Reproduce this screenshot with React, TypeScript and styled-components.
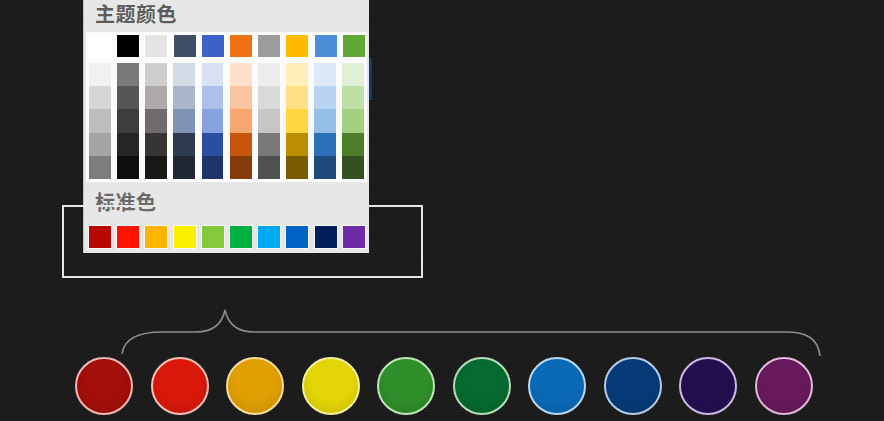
import styled, { createGlobalStyle } from 'styled-components';

const GlobalStyle = createGlobalStyle`
  html, body {
    margin: 0;
    padding: 0;
    background: #1c1c1c;
  }
  * {
    box-sizing: border-box;
  }
`;

// first row of the theme palette
const themeTop = [
  '#ffffff', '#000000', '#e4e4e4', '#3f4d66', '#3b62c8',
  '#ee7214', '#9c9c9c', '#ffbb00', '#4a8fd8', '#5fa832',
];

// tint/shade columns under every theme colour
const shades = [
  ['#f1f1f1', '#d6d6d6', '#bdbdbd', '#a4a4a4', '#7d7d7d'],
  ['#7a7a7a', '#565656', '#3d3d3d', '#252525', '#0e0e0e'],
  ['#cfcdcd', '#aeaaaa', '#716c6c', '#373434', '#191818'],
  ['#d5dbe6', '#a9b6cb', '#7f93b2', '#2e3a4f', '#202836'],
  ['#d8e0f3', '#adc0ea', '#86a2e0', '#2c4ea0', '#1e3468'],
  ['#fde1cc', '#f9c4a0', '#f6a66e', '#c6560e', '#843a0b'],
  ['#ececec', '#d9d9d9', '#c6c6c6', '#797979', '#505050'],
  ['#fff0bb', '#ffe086', '#ffd640', '#bb8d00', '#7a5b00'],
  ['#dde9f8', '#b8d4f0', '#95bfe8', '#2a6fb8', '#1d4a7a'],
  ['#e0efd6', '#bfdfa8', '#a0d080', '#4c7e2a', '#33521f'],
];

const standard = [
  '#b80800', '#ff1200', '#ffb400', '#fbf000', '#85c93c',
  '#00b042', '#00a9f2', '#0062c2', '#001e5c', '#6f2aa6',
];

const dots = [
  { fill: '#a30f0a', ring: '#f0b8b4' },
  { fill: '#d9180a', ring: '#f6c0b6' },
  { fill: '#e0a004', ring: '#f3dc9c' },
  { fill: '#e4d606', ring: '#f4eea0' },
  { fill: '#2f8f2a', ring: '#bfe4b8' },
  { fill: '#066b30', ring: '#b6dcb8' },
  { fill: '#0b6ab8', ring: '#b8d8f0' },
  { fill: '#073b78', ring: '#b4cbe8' },
  { fill: '#22104f', ring: '#cdb8e2' },
  { fill: '#681a5c', ring: '#e2b8dc' },
];

export default function App() {
  return (
    <>
      <GlobalStyle />
      <Stage>
        <TopRow>
          <Panel>
            <Heading>主题颜色</Heading>
            <ThemeArea>
              <SwatchRow>
                {themeTop.map((c, i) => (
                  <Swatch key={i} $color={c} />
                ))}
              </SwatchRow>
              <ShadeRow>
                {shades.map((col, i) => (
                  <ShadeColumn key={i}>
                    {col.map((c, j) => (
                      <Shade key={j} $color={c} />
                    ))}
                  </ShadeColumn>
                ))}
              </ShadeRow>
            </ThemeArea>
            <SubHeading>标准色</SubHeading>
            <StandardRow>
              {standard.map((c, i) => (
                <Swatch key={i} $color={c} />
              ))}
            </StandardRow>
          </Panel>
          <Sliver />
        </TopRow>

        <Brace width="884" height="52" viewBox="0 0 884 52">
          <path
            d="M122,48 C124,33 138,26 162,26 L196,26 C213,26 222,18 225,4 C228,18 237,26 254,26 L786,26 C806,26 818,32 820,50"
            fill="none"
            stroke="#8c8c8c"
            strokeWidth="1.6"
          />
        </Brace>

        <DotRow>
          {dots.map((d, i) => (
            <Dot key={i} $fill={d.fill} $ring={d.ring} />
          ))}
        </DotRow>

        {/* annotation frame drawn over the palette */}
        <Highlight />
      </Stage>
    </>
  );
}

const Stage = styled.div`
  position: relative;
  width: 884px;
  height: 421px;
  overflow: hidden;
  display: flex;
  flex-direction: column;
  background-color: #1b1b1b;
  background-image: repeating-linear-gradient(
    0deg,
    rgba(255, 255, 255, 0.015) 0px,
    rgba(255, 255, 255, 0.015) 1px,
    transparent 1px,
    transparent 3px
  );
`;

const TopRow = styled.div`
  display: flex;
  align-items: flex-start;
  padding-left: 83px;
`;

const Panel = styled.div`
  width: 286px;
  height: 253px;
  background: #e7e7e7;
  border-left: 1px solid #c4c4c4;
  display: flex;
  flex-direction: column;
  padding-left: 2px;
`;

const Heading = styled.div`
  height: 32px;
  padding: 0 0 0 9px;
  font-family: 'Noto Sans CJK SC', 'Noto Sans', sans-serif;
  font-size: 20px;
  font-weight: 700;
  line-height: 28px;
  color: #5c5c5c;
  letter-spacing: 0.5px;
`;

const ThemeArea = styled.div`
  width: 281px;
  background: #fbfbfb;
  padding: 3px 3px 3px 3px;
  display: flex;
  flex-direction: column;
  gap: 6px;
`;

const SwatchRow = styled.div`
  display: flex;
  gap: 6.2px;
`;

const Swatch = styled.div<{ $color: string }>`
  width: 22px;
  height: 22px;
  flex: none;
  background: ${(p) => p.$color};
  box-shadow: 0 0 0 1px rgba(255, 255, 255, 0.7);
`;

const ShadeRow = styled.div`
  display: flex;
  gap: 6.2px;
`;

const ShadeColumn = styled.div`
  width: 22px;
  display: flex;
  flex-direction: column;
`;

const Shade = styled.div<{ $color: string }>`
  height: 23.2px;
  background: ${(p) => p.$color};
`;

const SubHeading = styled.div`
  height: 44px;
  padding: 8px 0 0 9px;
  font-family: 'Noto Sans CJK SC', 'Noto Sans', sans-serif;
  font-size: 20px;
  font-weight: 700;
  line-height: 24px;
  color: #6a6a6a;
  letter-spacing: 0.5px;
`;

const StandardRow = styled.div`
  display: flex;
  gap: 6.2px;
  padding-left: 3px;
`;

const Sliver = styled.div`
  width: 3px;
  height: 42px;
  margin-top: 58px;
  background: #123a6a;
`;

const Brace = styled.svg`
  display: block;
  margin-top: 53px;
  flex: none;
`;

const DotRow = styled.div`
  display: flex;
  gap: 17.5px;
  padding-left: 75px;
  margin-top: -1px;
`;

const Dot = styled.div<{ $fill: string; $ring: string }>`
  width: 58px;
  height: 58px;
  flex: none;
  border-radius: 50%;
  background: ${(p) => p.$fill};
  border: 2px solid ${(p) => p.$ring};
  box-shadow: inset 0 -6px 10px rgba(0, 0, 0, 0.08);
`;

const Highlight = styled.div`
  position: absolute;
  left: 62px;
  top: 205px;
  width: 361px;
  height: 73px;
  border: 2px solid #e6e6e6;
  pointer-events: none;
`;
